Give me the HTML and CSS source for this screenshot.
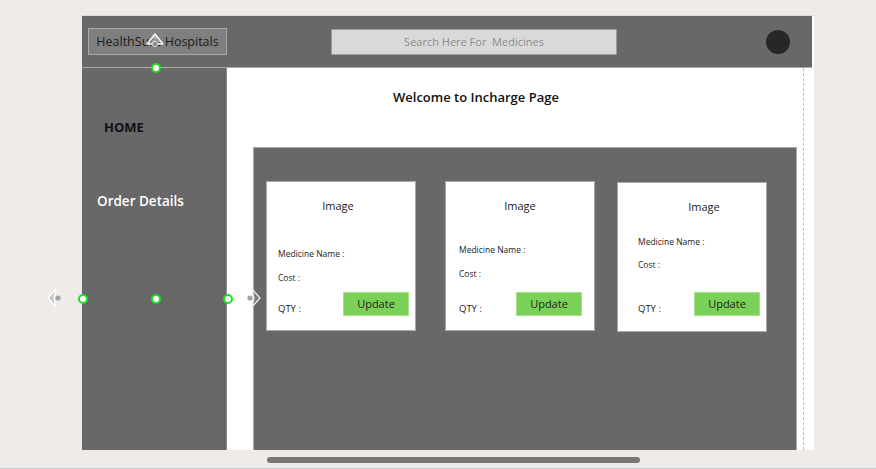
FILE: index.html
```html
<!DOCTYPE html>
<html>
<head>
<meta charset="utf-8">
<link rel="stylesheet" href="styles.css">
</head>
<body>
<div class="frame">
  <header class="header">
    <div class="logo">HealthSure Hospitals</div>
    <div class="search">Search Here For &nbsp;Medicines</div>
    <div class="avatar"></div>
  </header>
  <div class="content">
    <nav class="sidebar">
      <div class="nav-home">HOME</div>
      <div class="nav-orders">Order Details</div>
    </nav>
    <main class="main">
      <h1 class="title">Welcome to Incharge Page</h1>
      <section class="panel">
        <div class="card card-a">
          <div class="img-label">Image</div>
          <div class="field field-name">Medicine Name :</div>
          <div class="field field-cost">Cost :</div>
          <div class="card-foot">
            <span class="qty">QTY :</span>
            <button class="update">Update</button>
          </div>
        </div>
        <div class="card card-b">
          <div class="img-label">Image</div>
          <div class="field field-name">Medicine Name :</div>
          <div class="field field-cost">Cost :</div>
          <div class="card-foot">
            <span class="qty">QTY :</span>
            <button class="update">Update</button>
          </div>
        </div>
        <div class="card card-c">
          <div class="img-label">Image</div>
          <div class="field field-name">Medicine Name :</div>
          <div class="field field-cost">Cost :</div>
          <div class="card-foot">
            <span class="qty">QTY :</span>
            <button class="update">Update</button>
          </div>
        </div>
      </section>
    </main>
    <div class="gutter"></div>
  </div>
</div>
<div class="hscroll"></div>
<div class="bottom-line"></div>

<!-- editor overlays -->
<svg class="ov ov-rotate" width="20" height="16" viewBox="0 0 20 16">
  <path d="M2 12 L10 2 L18 12 Z" fill="rgba(255,255,255,0.35)" stroke="#f4f4f4" stroke-width="1.6" stroke-linejoin="round"/>
  <circle cx="10" cy="12" r="2.6" fill="#8a8a8a" stroke="#d8d8d8" stroke-width="1"/>
</svg>
<span class="ov handle h-top"></span>
<span class="ov handle h-left"></span>
<span class="ov handle h-mid"></span>
<span class="ov handle h-right"></span>
<svg class="ov arrow-left" width="16" height="20" viewBox="0 0 16 20">
  <path d="M9 1 L1 10 L9 19 L7 10 Z" fill="#c9c9c9" stroke="#ffffff" stroke-width="1.2" stroke-linejoin="round"/>
  <circle cx="11" cy="10" r="2.6" fill="#a3a3a3"/>
</svg>
<svg class="ov arrow-right" width="16" height="20" viewBox="0 0 16 20">
  <circle cx="4" cy="10" r="2.6" fill="#a3a3a3"/>
  <path d="M6 1 L14 10 L6 19 L8 10 Z" fill="#7a7a7a" stroke="#f0f0f0" stroke-width="1.2" stroke-linejoin="round"/>
</svg>
</body>
</html>
```

FILE: styles.css
```css
html, body {
  margin: 0;
  padding: 0;
}
body {
  position: relative;
  width: 876px;
  height: 469px;
  overflow: hidden;
  background: #efebe8;
  font-family: "Open Sans", "Noto Sans", "DejaVu Sans", sans-serif;
}
.frame {
  margin: 15px 0 0 82px;
  width: 732px;
  height: 434px;
  background: #ffffff;
  border-top: 1px solid #dcdcdc;
  display: flex;
  flex-direction: column;
}
.header {
  width: 730px;
  height: 51px;
  background: #686868;
  border-bottom: 1px solid #a9a9a9;
  display: flex;
  align-items: center;
  box-sizing: content-box;
}
.logo {
  margin-left: 6px;
  width: 137px;
  height: 25px;
  background: #7f7f7f;
  border: 1px solid #a9a9a9;
  color: #1c1c1c;
  font-size: 12.5px;
  line-height: 25px;
  text-align: center;
}
.search {
  margin-left: 104px;
  width: 284px;
  height: 24px;
  background: #d9d9d9;
  border: 1px solid #9c9c9c;
  color: #8c8c8c;
  font-size: 11px;
  line-height: 24px;
  text-align: center;
  white-space: pre;
}
.avatar {
  margin-left: auto;
  margin-right: 22px;
  width: 24px;
  height: 24px;
  border-radius: 50%;
  background: #272727;
}
.content {
  flex: 1;
  display: flex;
  min-height: 0;
}
.sidebar {
  width: 144px;
  background: #686868;
  border-right: 1px solid #8e8e8e;
  display: flex;
  flex-direction: column;
}
.nav-home {
  margin: 50px 0 0 22px;
  font-size: 13px;
  font-weight: 700;
  color: #111111;
  line-height: 18px;
}
.nav-orders {
  margin: 55px 0 0 15px;
  font-size: 13.5px;
  font-weight: 600;
  color: #ffffff;
  line-height: 20px;
}
.main {
  width: 576px;
  display: flex;
  flex-direction: column;
}
.title {
  margin: 20px 0 0 166px;
  font-size: 13px;
  font-weight: 600;
  color: #111111;
  line-height: 18px;
}
.panel {
  margin: 41px 0 0 26px;
  width: 542px;
  flex: 1;
  background: #686868;
  border: 1px solid #a9a9a9;
  border-bottom: none;
  display: flex;
  align-items: flex-start;
}
.card {
  width: 148px;
  height: 148px;
  background: #ffffff;
  border: 1px solid #a9a9a9;
  display: flex;
  flex-direction: column;
  color: #222222;
}
.card-a { margin: 33px 0 0 12px; }
.card-b { margin: 33px 0 0 29px; }
.card-c { margin: 34px 0 0 22px; }
.img-label {
  margin-top: 17px;
  font-size: 11px;
  line-height: 14px;
  text-align: center;
}
.card-a .img-label { padding-right: 6px; }
.card-c .img-label { padding-left: 24px; }
.field {
  font-size: 8.5px;
  line-height: 12px;
  white-space: nowrap;
}
.field-cost { margin-top: 12px; }
.card-a .field, .card-a .qty { padding-left: 11px; }
.card-b .field, .card-b .qty { padding-left: 13px; }
.card-c .field, .card-c .qty { padding-left: 20px; }
.card-a .field-name { margin-top: 35px; }
.card-b .field-name { margin-top: 31px; }
.card-c .field-name { margin-top: 22px; }
.card-c .field-cost { margin-top: 11px; }
.card-foot {
  margin-top: auto;
  margin-bottom: 14px;
  display: flex;
  align-items: center;
  justify-content: space-between;
  padding-right: 6px;
}
.card-b .card-foot { padding-right: 12px; }
.card-c .card-foot { margin-bottom: 15px; }
.qty {
  font-size: 9.5px;
  line-height: 12px;
  margin-top: 10px;
}
.update {
  width: 66px;
  height: 24px;
  background: #7bd057;
  border: 1px solid #a7e08d;
  color: #1e1e1e;
  font-family: "Open Sans", "Noto Sans", sans-serif;
  font-size: 11px;
  padding: 0;
  margin: 0;
  line-height: 20px;
}
.gutter {
  flex: 1;
  border-left: 1px dashed #bdbdbd;
}
.hscroll {
  margin: 7px 0 0 267px;
  width: 373px;
  height: 6px;
  border-radius: 3px;
  background: #7b7773;
}
.bottom-line {
  margin-top: 5px;
  height: 1px;
  background: #c9c9c9;
}
.ov {
  position: absolute;
}
.ov-rotate {
  left: 145px;
  top: 32px;
}
.handle {
  width: 6px;
  height: 6px;
  border-radius: 50%;
  background: #ffffff;
  border: 2px solid #22dd22;
}
.h-top { left: 151px; top: 63px; }
.h-left { left: 78px; top: 294px; }
.h-mid { left: 151px; top: 294px; }
.h-right { left: 223px; top: 294px; }
.arrow-left { left: 47px; top: 288px; }
.arrow-right { left: 246px; top: 288px; }
```
